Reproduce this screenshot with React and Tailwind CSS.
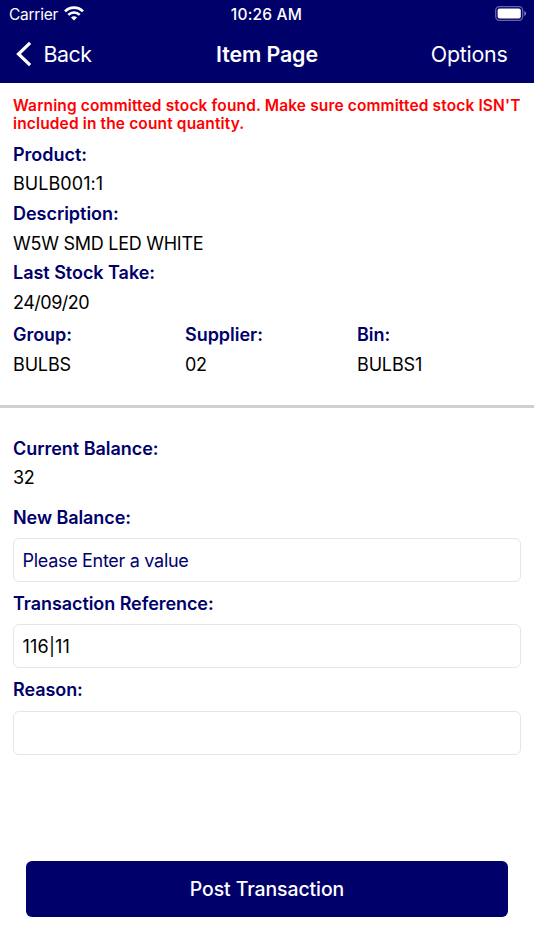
import { useState } from 'react'

const details = [
  { label: 'Product:', value: 'BULB001:1', spacing: 'tracking-[0.05px]' },
  { label: 'Description:', value: 'W5W SMD LED WHITE', spacing: 'tracking-[-0.26px]' },
  { label: 'Last Stock Take:', value: '24/09/20', spacing: 'tracking-[-0.5px]' },
]

const location = [
  { label: 'Group:', value: 'BULBS', spacing: 'tracking-[-0.15px]' },
  { label: 'Supplier:', value: '02', spacing: 'tracking-[-0.26px]' },
  { label: 'Bin:', value: 'BULBS1', spacing: 'tracking-[-0.15px]' },
]

export default function App() {
  const [form, setForm] = useState({
    balance: '',
    reference: '116|11',
    reason: '',
  })

  const update = (key, value) =>
    setForm((prev) => ({ ...prev, [key]: value }))

  return (
    <div className="flex h-[950px] w-[534px] flex-col overflow-hidden bg-white font-['Inter','Liberation_Sans',sans-serif] text-[18px] text-black">
      <header className="h-[83px] shrink-0 bg-[#00006b] text-white">
        <StatusBar />
        <NavBar />
      </header>

      <section className="h-[322px] shrink-0 px-[13px] pt-[14px]">
        <p className="text-[15.5px] leading-[18px] font-semibold tracking-[0.135px] whitespace-nowrap text-[#ff0000]">
          Warning committed stock found. Make sure committed stock ISN'T
          <br />
          included in the count quantity.
        </p>
        <dl className="mt-[6.6px]">
          {details.map((item) => (
            <Detail key={item.label} {...item} />
          ))}
        </dl>
        <dl className="mt-[2.6px] grid grid-cols-[172px_172px_1fr]">
          {location.map((item) => (
            <Detail key={item.label} {...item} />
          ))}
        </dl>
      </section>

      <hr className="h-[2.5px] shrink-0 border-0 bg-[#d0d0d0]" />

      <main className="flex grow flex-col px-[13px] pt-[26px]">
        <dl>
          <Detail label="Current Balance:" value="32" spacing="tracking-[-0.26px]" />
        </dl>
        <div className="mt-[9px] flex flex-col gap-[6px]">
          <Field
            label="New Balance:"
            placeholder="Please Enter a value"
            value={form.balance}
            onChange={(v) => update('balance', v)}
          />
          <Field
            label="Transaction Reference:"
            value={form.reference}
            onChange={(v) => update('reference', v)}
          />
          <Field
            label="Reason:"
            value={form.reason}
            onChange={(v) => update('reason', v)}
          />
        </div>
        <button className="mx-[13px] mt-auto mb-[33px] h-[56px] rounded-[6px] bg-[#00006b] pt-[2px] text-[19.4px] font-medium tracking-[-0.07px] text-white">
          Post Transaction
        </button>
      </main>
    </div>
  )
}

function StatusBar() {
  return (
    <div className="grid h-[27px] grid-cols-3 items-center pr-[7px] pl-[9px] text-[15.5px]">
      <div className="flex items-center gap-[6px]">
        <span className="pt-[2px] tracking-[-0.25px]">Carrier</span>
        <WifiIcon />
      </div>
      <span className="pt-[2px] pr-[3px] text-center font-medium tracking-[0.2px]">10:26 AM</span>
      <BatteryIcon />
    </div>
  )
}

function NavBar() {
  return (
    <nav className="grid h-[55px] grid-cols-[1fr_auto_1fr] items-center px-[16px] text-[21.4px]">
      <button className="flex items-center gap-[10.5px]">
        <svg width="17" height="26" viewBox="0 0 17 26" fill="none">
          <path d="M14.1 1.9L2.5 13L14.1 24.1" stroke="white" strokeWidth="3.2" />
        </svg>
        <span className="tracking-[-0.5px]">Back</span>
      </button>
      <h1 className="text-center font-semibold tracking-[-0.1px]">Item Page</h1>
      <button className="pr-[10.5px] text-right tracking-[-0.25px]">Options</button>
    </nav>
  )
}

function Detail({ label, value, spacing }) {
  return (
    <div>
      <dt className="h-[29.67px] leading-[29.67px] font-semibold tracking-[-0.03px] text-[#00006b]">{label}</dt>
      <dd className={`h-[29.67px] leading-[29.67px] ${spacing}`}>{value}</dd>
    </div>
  )
}

function Field({ label, value, placeholder, onChange }) {
  return (
    <label className="block">
      <span className="block h-[36.3px] leading-[31px] font-semibold tracking-[-0.07px] text-[#00006b]">{label}</span>
      <input
        className="block h-[44px] w-full rounded-[6px] border border-[#e6e6e6] px-[8.5px] tracking-[0.2px] placeholder:tracking-[-0.3px] placeholder:text-[#00006b] focus:outline-none"
        value={value}
        placeholder={placeholder}
        onChange={(e) => onChange(e.target.value)}
      />
    </label>
  )
}

function WifiIcon() {
  return (
    <svg width="20" height="15" viewBox="0 0 20 15" fill="none" stroke="white" strokeWidth="2.6">
      <path d="M1 5.4C6 0.4 14 0.4 19 5.4" />
      <path d="M4.3 8.8C7.4 5.7 12.6 5.7 15.7 8.8" />
      <path d="M7 11.4C8.7 9.9 11.3 9.9 13 11.4L10 14.4Z" fill="white" stroke="none" />
    </svg>
  )
}

function BatteryIcon() {
  return (
    <svg className="justify-self-end" width="32" height="15" viewBox="0 0 32 15" fill="none">
      <rect x="0.7" y="0.7" width="27" height="13.6" rx="3.8" stroke="white" strokeOpacity="0.4" strokeWidth="1.3" />
      <rect x="2.6" y="2.6" width="23.2" height="9.8" rx="2" fill="white" />
      <path d="M29.3 5V10C30.4 9.5 31.1 8.6 31.1 7.5C31.1 6.4 30.4 5.5 29.3 5Z" fill="white" fillOpacity="0.5" />
    </svg>
  )
}
